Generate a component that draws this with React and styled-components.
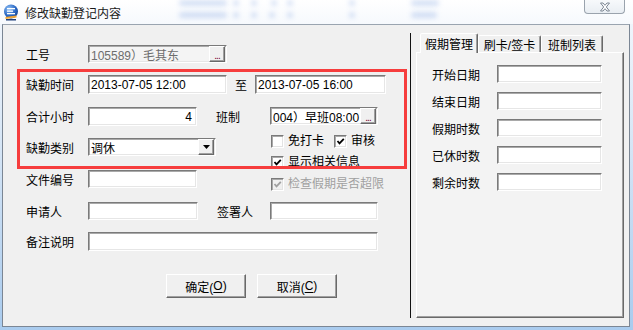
import React from "react";
import styled, { createGlobalStyle } from "styled-components";

const FONT = `"Liberation Sans", "Noto Sans CJK SC", sans-serif`;

const GlobalStyle = createGlobalStyle`
  html, body {
    margin: 0;
    padding: 0;
    background: #ffffff;
  }
  body {
    font-family: ${FONT};
    font-size: 12px;
    color: #000;
  }
`;

const Window = styled.div`
  width: 633px;
  height: 330px;
  display: flex;
  flex-direction: column;
  overflow: hidden;
  background: linear-gradient(180deg, #f4f8fd 0%, #d9e7f6 40%, #a9cbee 100%);
`;

const TitleBar = styled.div`
  height: 24px;
  flex-shrink: 0;
  display: flex;
  align-items: center;
  padding-left: 3px;
  background: linear-gradient(180deg, #ffffff 0%, #f6f9fd 100%);
`;

const TitleText = styled.span`
  margin-left: 6px;
  font-size: 12px;
  color: #1a1a1a;
  white-space: nowrap;
`;

const GhostArea = styled.div`
  align-self: stretch;
  margin-left: 58px;
  display: flex;
  flex-direction: column;
  justify-content: space-between;
  padding: 0 0 6px;
`;

const GhostLine = styled.div`
  display: flex;
  height: 6px;
`;

const GhostBlob = styled.span`
  display: block;
  width: ${(p) => p.$w}px;
  margin-left: ${(p) => p.$ml || 0}px;
  height: 6px;
  border-radius: 3px;
  background: rgba(70, 120, 210, 0.22);
  filter: blur(2.5px);
`;

const CloseButton = styled.div`
  margin-left: auto;
  margin-right: 8px;
  align-self: flex-start;
  width: 41px;
  height: 14px;
  box-sizing: border-box;
  border: 1px solid #9aa3ad;
  border-top: none;
  border-radius: 0 0 4px 4px;
  background: linear-gradient(180deg, #f7f9fb 0%, #e9eef3 100%);
  display: flex;
  align-items: center;
  justify-content: center;
`;

const Client = styled.div`
  flex: 1;
  display: flex;
  margin: 0 3px 3px 2px;
  background: #f0f0f0;
  border: 1px solid #7b8694;
  border-top-color: #9aa4b0;
`;

const LeftPane = styled.div`
  position: relative;
  width: 407px;
  flex-shrink: 0;
  box-sizing: border-box;
  padding: 20px 0 0 23px;
  display: flex;
  flex-direction: column;
`;

const Highlight = styled.div`
  position: absolute;
  left: 14px;
  top: 44px;
  width: 390px;
  height: 100px;
  box-sizing: border-box;
  border: 3px solid #f63d3d;
  pointer-events: none;
`;

const Row = styled.div`
  display: flex;
  align-items: center;
  margin-top: ${(p) => p.$mt || 0}px;
`;

const Block = styled.div`
  display: flex;
  align-items: flex-start;
  margin-top: ${(p) => p.$mt || 0}px;
`;

const SubCol = styled.div`
  display: flex;
  flex-direction: column;
  width: ${(p) => (p.$w ? `${p.$w}px` : "auto")};
`;

const Label = styled.span`
  width: ${(p) => p.$w || 62}px;
  margin-left: ${(p) => p.$ml || 0}px;
  flex-shrink: 0;
  font-size: 12px;
  white-space: nowrap;
`;

const Field = styled.div`
  position: relative;
  box-sizing: border-box;
  width: ${(p) => p.$w}px;
  height: ${(p) => p.$h || 18}px;
  display: flex;
  align-items: center;
  justify-content: ${(p) => (p.$align === "right" ? "flex-end" : "flex-start")};
  padding: 0 ${(p) => (p.$align === "right" ? 4 : 1)}px 0 2px;
  background: ${(p) => (p.$muted ? "#f4f4f4" : "#ffffff")};
  border: 1px solid;
  border-color: #7a7a7a #ffffff #ffffff #7a7a7a;
  box-shadow: inset 1px 1px 0 #a9a9a9, inset -1px -1px 0 #e6e6e6;
  color: ${(p) => (p.$muted ? "#6d6d6d" : "#000")};
  font-size: 12px;
  white-space: nowrap;
  overflow: hidden;
`;

const FieldText = styled.span`
  flex: 1;
  overflow: hidden;
`;

const MiniButton = styled.div`
  width: 16px;
  height: 16px;
  flex-shrink: 0;
  box-sizing: border-box;
  background: #f0f0f0;
  border: 1px solid;
  border-color: #ffffff #696969 #696969 #ffffff;
  box-shadow: inset -1px -1px 0 #a0a0a0;
  display: flex;
  align-items: ${(p) => (p.$arrow ? "center" : "flex-end")};
  justify-content: center;
  font-size: 10px;
  line-height: 10px;
  letter-spacing: -1px;
  color: ${(p) => (p.$arrow ? "#000" : "#7a0030")};
`;

const CheckRow = styled.div`
  display: flex;
  align-items: center;
  height: 13px;
  padding-left: 55px;
  margin-top: ${(p) => p.$mt || 0}px;
`;

const CheckItem = styled.label`
  display: flex;
  align-items: center;
  margin-left: ${(p) => p.$ml || 0}px;
  color: ${(p) => (p.$disabled ? "#a0a0a0" : "#000")};
  font-size: 12px;
  line-height: 13px;
  white-space: nowrap;
`;

const Box = styled.span`
  width: 13px;
  height: 13px;
  box-sizing: border-box;
  flex-shrink: 0;
  margin-right: 4px;
  background: ${(p) => (p.$disabled ? "#f0f0f0" : "#ffffff")};
  border: 1px solid;
  border-color: #7a7a7a #ffffff #ffffff #7a7a7a;
  box-shadow: inset 1px 1px 0 #a9a9a9, inset -1px -1px 0 #e3e3e3;
  display: flex;
  align-items: center;
  justify-content: center;
`;

const ButtonRow = styled.div`
  display: flex;
  gap: 11px;
  margin: 23px 0 0 140px;
`;

const PushButton = styled.div`
  width: 80px;
  height: 24px;
  box-sizing: border-box;
  background: #f0f0f0;
  border: 1px solid;
  border-color: #ffffff #696969 #696969 #ffffff;
  box-shadow: inset -1px -1px 0 #a0a0a0;
  display: flex;
  align-items: center;
  justify-content: center;
  font-size: 12px;
  color: #000;
`;

const Key = styled.span`
  text-decoration: underline;
  text-underline-offset: 2px;
`;

const RightPane = styled.div`
  flex: 1;
  display: flex;
  padding: 8px 5px 8px 0;
`;

const Divider = styled.div`
  width: 1px;
  background: #111;
  margin-right: 5px;
`;

const TabControl = styled.div`
  flex: 1;
  display: flex;
  flex-direction: column;
`;

const TabStrip = styled.div`
  display: flex;
  align-items: flex-end;
  height: 19px;
  padding-left: 4px;
`;

const Tab = styled.div`
  position: relative;
  z-index: ${(p) => (p.$active ? 2 : 1)};
  width: ${(p) => p.$w}px;
  height: ${(p) => (p.$active ? 20 : 17)}px;
  margin-bottom: ${(p) => (p.$active ? -1 : 0)}px;
  box-sizing: border-box;
  background: ${(p) => (p.$active ? "#f3f3f3" : "#f0f0f0")};
  border: 1px solid;
  border-bottom: none;
  border-color: #ffffff #696969 transparent #ffffff;
  border-radius: 2px 2px 0 0;
  box-shadow: inset -1px 0 0 #a0a0a0;
  display: flex;
  align-items: ${(p) => (p.$active ? "flex-start" : "center")};
  padding-top: ${(p) => (p.$active ? 1 : 0)}px;
  justify-content: center;
  font-size: 12px;
  white-space: nowrap;
`;

const TabPanel = styled.div`
  flex: 1;
  box-sizing: border-box;
  background: #f3f3f3;
  border: 1px solid;
  border-color: #ffffff #696969 #696969 #ffffff;
  box-shadow: inset -1px -1px 0 #a0a0a0;
  padding: 12px 0 0 15px;
  display: flex;
  flex-direction: column;
  gap: 9px;
`;

const TitleIcon = () => (
  <svg width="16" height="17" viewBox="0 0 16 17">
    <defs>
      <radialGradient id="ball" cx="0.35" cy="0.3" r="0.8">
        <stop offset="0" stopColor="#8fc0f5" />
        <stop offset="0.6" stopColor="#2a68c4" />
        <stop offset="1" stopColor="#163f86" />
      </radialGradient>
    </defs>
    <circle cx="8" cy="7.5" r="7" fill="url(#ball)" />
    <rect x="4" y="4" width="8" height="1.3" fill="#fff" />
    <rect x="4" y="6.5" width="6" height="1.3" fill="#fff" />
    <rect x="4" y="9" width="8" height="1.3" fill="#fff" />
    <path d="M2.5 13 L13.5 11.5 L13.5 13.5 L2.5 15 Z" fill="#f1a534" />
    <rect x="3" y="15" width="10" height="1.5" fill="#1e3f7a" />
  </svg>
);

const CloseGlyph = () => (
  <svg width="12" height="10" viewBox="0 0 12 10">
    <path
      d="M1.5 1 H4 L6 3.3 L8 1 H10.5 L7.3 5 L10.5 9 H8 L6 6.7 L4 9 H1.5 L4.7 5 Z"
      fill="#ffffff"
      stroke="#7d8794"
      strokeWidth="1"
      strokeLinejoin="round"
    />
  </svg>
);

const Tick = ({ color = "#000" }) => (
  <svg width="9" height="9" viewBox="0 0 9 9">
    <polyline
      points="1.5,4 3.5,6.3 7.8,1.8"
      fill="none"
      stroke={color}
      strokeWidth="1.8"
    />
  </svg>
);

const Arrow = () => (
  <svg width="7" height="4" viewBox="0 0 7 4">
    <path d="M0 0 H7 L3.5 4 Z" fill="#000" />
  </svg>
);

const Check = ({ checked, disabled, ml, children }) => (
  <CheckItem $ml={ml} $disabled={disabled}>
    <Box $disabled={disabled}>
      {checked && <Tick color={disabled ? "#a0a0a0" : "#000"} />}
    </Box>
    {children}
  </CheckItem>
);

const holidayRows = ["开始日期", "结束日期", "假期时数", "已休时数", "剩余时数"];

const App = () => {
  return (
    <>
      <GlobalStyle />
      <Window>
        <TitleBar>
          <TitleIcon />
          <TitleText>修改缺勤登记内容</TitleText>
          <GhostArea>
            <GhostLine>
              <GhostBlob $w={48} />
              <GhostBlob $w={6} $ml={6} />
              <GhostBlob $w={6} $ml={12} />
              <GhostBlob $w={6} $ml={14} />
              <GhostBlob $w={6} $ml={10} />
              <GhostBlob $w={6} $ml={56} />
              <GhostBlob $w={28} $ml={56} />
            </GhostLine>
            <GhostLine>
              <GhostBlob $w={48} />
              <GhostBlob $w={6} $ml={6} />
              <GhostBlob $w={6} $ml={12} />
              <GhostBlob $w={6} $ml={12} />
              <GhostBlob $w={6} $ml={12} />
              <GhostBlob $w={6} $ml={56} />
              <GhostBlob $w={26} $ml={56} />
            </GhostLine>
          </GhostArea>
          <CloseButton>
            <CloseGlyph />
          </CloseButton>
        </TitleBar>

        <Client>
          <LeftPane>
            <Row>
              <Label>工号</Label>
              <Field $w={139} $muted>
                <FieldText>105589）毛其东</FieldText>
                <MiniButton>...</MiniButton>
              </Field>
            </Row>

            <Row $mt={12}>
              <Label>缺勤时间</Label>
              <Field $w={139} $h={19}>
                2013-07-05 12:00
              </Field>
              <Label $w={20} $ml={8}>
                至
              </Label>
              <Field $w={131} $h={19}>
                2013-07-05 16:00
              </Field>
            </Row>

            <Block $mt={13}>
              <SubCol $w={190}>
                <Row>
                  <Label>合计小时</Label>
                  <Field $w={109} $h={19} $align="right">
                    4
                  </Field>
                </Row>
                <Row $mt={12}>
                  <Label>缺勤类别</Label>
                  <Field $w={139}>
                    <FieldText>调休</FieldText>
                    <MiniButton $arrow>
                      <Arrow />
                    </MiniButton>
                  </Field>
                </Row>
                <Row $mt={14}>
                  <Label>文件编号</Label>
                  <Field $w={109} />
                </Row>
              </SubCol>
              <SubCol>
                <Row>
                  <Label $w={54}>班制</Label>
                  <Field $w={108}>
                    <FieldText>004）早班08:00</FieldText>
                    <MiniButton>...</MiniButton>
                  </Field>
                </Row>
                <CheckRow $mt={10}>
                  <Check>免打卡</Check>
                  <Check checked ml={10}>
                    审核
                  </Check>
                </CheckRow>
                <CheckRow $mt={8}>
                  <Check checked>显示相关信息</Check>
                </CheckRow>
                <CheckRow $mt={9}>
                  <Check checked disabled>
                    检查假期是否超限
                  </Check>
                </CheckRow>
              </SubCol>
            </Block>

            <Row $mt={11}>
              <Label>申请人</Label>
              <Field $w={110} />
              <Label $w={53} $ml={19}>
                签署人
              </Label>
              <Field $w={108} />
            </Row>

            <Row $mt={12}>
              <Label>备注说明</Label>
              <Field $w={290} $h={19} />
            </Row>

            <ButtonRow>
              <PushButton>
                确定(<Key>O</Key>)
              </PushButton>
              <PushButton>
                取消(<Key>C</Key>)
              </PushButton>
            </ButtonRow>

            <Highlight />
          </LeftPane>

          <RightPane>
            <Divider />
            <TabControl>
              <TabStrip>
                <Tab $active $w={58}>
                  假期管理
                </Tab>
                <Tab $w={63}>刷卡/签卡</Tab>
                <Tab $w={62}>班制列表</Tab>
              </TabStrip>
              <TabPanel>
                {holidayRows.map((name) => (
                  <Row key={name}>
                    <Label $w={65}>{name}</Label>
                    <Field $w={105} />
                  </Row>
                ))}
              </TabPanel>
            </TabControl>
          </RightPane>
        </Client>
      </Window>
    </>
  );
};

export default App;
